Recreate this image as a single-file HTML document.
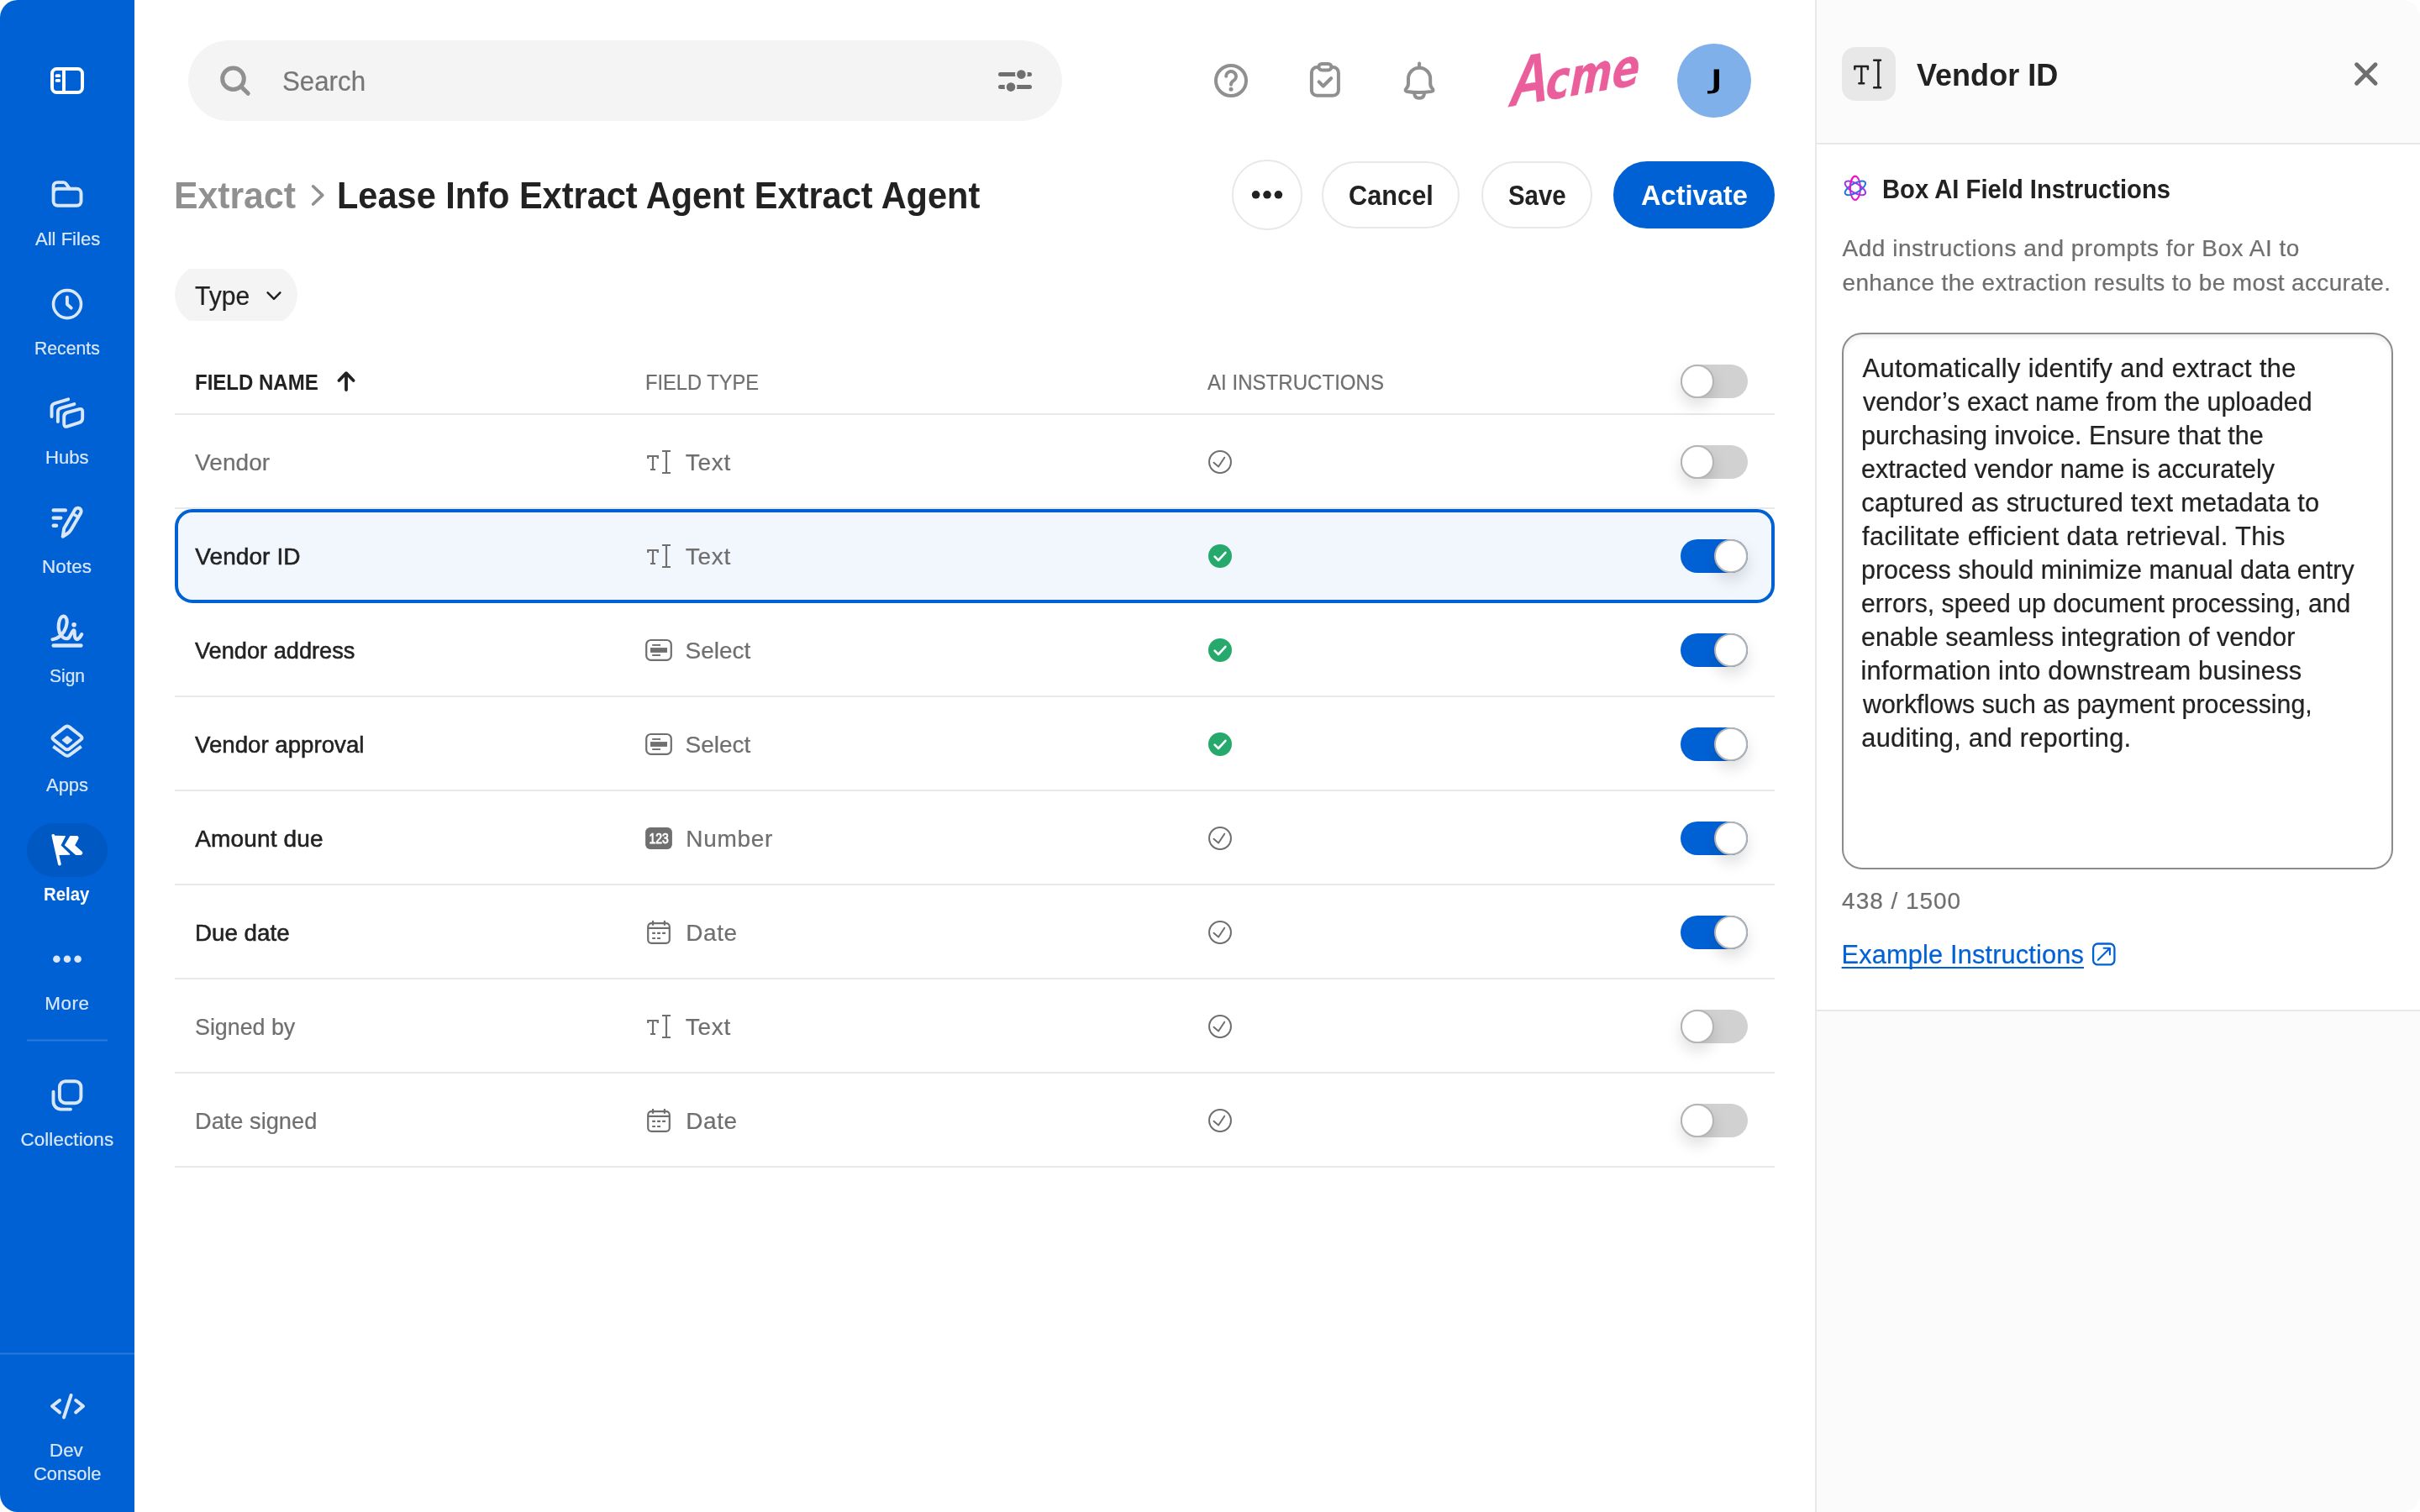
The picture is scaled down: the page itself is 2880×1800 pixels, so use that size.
<!DOCTYPE html>
<html lang="en">
<head>
<meta charset="utf-8">
<title>Extract - Lease Info Extract Agent</title>
<style>
html,body{margin:0;padding:0;background:#fff;}
@media (-webkit-min-device-pixel-ratio:2),(min-resolution:2dppx){html{zoom:.5;}}
body{width:2880px;height:1800px;overflow:hidden;position:relative;font-family:"Liberation Sans",sans-serif;}
#app{position:absolute;left:0;top:0;width:2880px;height:1800px;overflow:hidden;border-radius:21px;background:#fff;will-change:transform;}
.abs{position:absolute;}
.t{position:absolute;white-space:nowrap;line-height:1;transform-origin:0 0;font-family:"Liberation Sans",sans-serif;}
#sidebar{position:absolute;left:0;top:0;width:160px;height:1800px;background:#0061d5;}
.btn{position:absolute;top:192px;height:80px;border-radius:40px;border:2px solid #e8e8e8;box-sizing:border-box;background:#fff;}
.logo{position:absolute;display:inline-block;left:1796px;top:57.80px;white-space:nowrap;line-height:1;font-family:"DejaVu Sans","Liberation Sans",sans-serif;font-style:italic;font-weight:700;font-size:61px;color:#ea5f9b;-webkit-text-stroke:0.3px #ea5f9b;transform-origin:0 69.00px;transform:rotate(-9.8deg) skewX(-12deg) scaleX(0.805);}
.logo::first-letter{font-family:"Liberation Sans",sans-serif;font-size:82px;margin-right:-5px;}
.tg{position:absolute;left:2000px;width:80px;height:40px;border-radius:20px;background:#d1d1d1;}
.tg i{position:absolute;left:0;top:0;width:40px;height:40px;box-sizing:border-box;border-radius:50%;background:#fff;border:2px solid #b4b4b4;box-shadow:0 9px 18px rgba(0,0,0,0.13);}
.tg.on{background:#0061d5;}
.tg.on i{left:40px;}
</style>
</head>
<body>
<div id="app">
<div id="sidebar">
<svg class="abs" style="left:0;top:0" width="160" height="1800" viewBox="0 0 160 1800">
<g fill="none" stroke="#fff" stroke-width="4"><rect x="62" y="82" width="36" height="28" rx="5.5"/><line x1="76" y1="82" x2="76" y2="110"/></g><rect x="65.6" y="88.3" width="6.6" height="3.8" rx="1.9" fill="#fff"/><rect x="65.6" y="94" width="6.6" height="3.8" rx="1.9" fill="#fff"/>
<g fill="none" stroke="#d9e7f9" stroke-width="3.9" stroke-linecap="round" stroke-linejoin="round"><path d="M63.6 229 V221.7 a4.6 4.6 0 0 1 4.6 -4.6 H75.4 a4 4 0 0 1 3.3 1.8 L82.6 224.4"/><rect x="63.6" y="224.8" width="32.9" height="20" rx="5"/></g>
<g fill="none" stroke="#d9e7f9" stroke-linecap="round" stroke-linejoin="round"><circle cx="80" cy="362.1" r="16.5" stroke-width="3.6"/><path d="M79.9 353.7 V362.3 L84.7 366.6" stroke-width="3.9"/></g>
<g fill="none" stroke="#d9e7f9" stroke-width="3.9" stroke-linecap="round" stroke-linejoin="round"><path d="M76.2 504.4 V496.3 Q76.2 492.1 80.2 491 L94.3 487.1 Q98.2 486 98.2 490 V498 Q98.2 502 94.3 503.2 L80.2 507.6 Q76.2 508.8 76.2 504.4 Z"/><path d="M68.9 502.1 V490.5 Q68.9 486.7 72.8 485.6 L88.4 481.1"/><path d="M61.5 496.1 V485 Q61.5 481.2 65.4 480.1 L81.2 475.3"/></g>
<g fill="none" stroke="#d9e7f9" stroke-linecap="round" stroke-linejoin="round"><path d="M63.7 607.4 H77.8 M63.7 616.6 H72.3 M63.7 625.7 H67" stroke-width="4.4"/><path d="M89.35 606.5 A4 4 0 0 1 96.25 610.5 L84.8 630.2 Q82.8 633.6 79.4 635.8 L74.7 638.7 L76.3 628.9 Z" stroke-width="4"/><path d="M87.6 612.3 L93.6 615.8" stroke-width="3.6" stroke-linecap="butt"/></g>
<g fill="none" stroke="#d9e7f9" stroke-linecap="round" stroke-linejoin="round"><path d="M63.7 768.5 H96.4" stroke-width="4.4"/><path d="M62.5 761.2 C68 760.6 73 757 76.4 751.4 C80 745.4 80.6 738 78.2 735 C76 732.2 72.4 733.6 70.8 738.6 C68.8 745 69.6 752.6 72.8 756.6 C76 760.8 80.4 761.6 82.8 758 C84.6 755.2 85.6 751.6 87.4 750.4 C89 749.6 88.6 753 88.8 756 C89 759.6 90.4 761.8 92.6 760.8 C94.6 759.8 96 757.6 97.2 755.2" stroke-width="4.1"/></g><circle cx="88.1" cy="743.7" r="2.8" fill="#d9e7f9"/>
<g fill="none" stroke="#d9e7f9" stroke-width="3.9" stroke-linejoin="round"><path d="M77.2 865.6 Q80 863.4 82.8 865.6 L96.2 876.2 Q98.9 878.4 96.2 880.6 L82.8 891.2 Q80 893.4 77.2 891.2 L63.8 880.6 Q61.1 878.4 63.8 876.2 Z"/><path d="M63.3 888.6 L77.2 898.8 Q80 900.8 82.8 898.8 L96.7 888.6" stroke-linecap="butt"/></g><path d="M79 876.4 Q80 875.6 81 876.4 L85.6 880.2 Q86.6 881.1 85.6 882 L81 885.8 Q80 886.6 79 885.8 L74.4 882 Q73.4 881.1 74.4 880.2 Z" fill="#d9e7f9"/>
<rect x="32" y="980" width="96" height="64" rx="32" fill="#0058c3"/>
<g fill="#fff" stroke="#fff" stroke-linejoin="round" stroke-linecap="round"><path d="M63.3 994.9 L70.9 1028.6" stroke-width="3.7" fill="none"/><path d="M64.4 995.4 L77.2 995.6 L71.7 1006.4 L82.6 1017.1 L69.6 1017.3 Z" stroke-width="1.4"/><path d="M83.9 995.6 L91.6 995.6 Q93.4 996.4 92.6 998.4 L88.4 1006.4 L97.4 1014.6 Q98.2 1016.6 96 1017.2 L90.4 1017.2 L77.6 1006 Z" stroke-width="1.4"/></g>
<g fill="#d9e7f9"><circle cx="67.4" cy="1141.8" r="4.3"/><circle cx="80" cy="1141.8" r="4.3"/><circle cx="92.6" cy="1141.8" r="4.3"/></g>
<rect x="32" y="1237.5" width="96" height="2" fill="#2b7adb"/>
<g fill="none" stroke="#d9e7f9" stroke-width="3.9" stroke-linecap="round" stroke-linejoin="round"><rect x="70.9" y="1287.2" width="25.5" height="26" rx="7"/><path d="M63.5 1299.8 V1311.6 a9 9 0 0 0 9 9 H84"/></g>
<rect x="0" y="1610.5" width="160" height="2" fill="#2b7adb"/>
<g fill="none" stroke="#d9e7f9" stroke-width="4" stroke-linecap="round" stroke-linejoin="round"><path d="M71 1667 L62 1674 L71 1681.4"/><path d="M84.6 1661 L76 1687.4"/><path d="M90.2 1667 L99 1674 L90.2 1681.4"/></g>
</svg>
<span class="t" style="left:41.7px;top:273.61px;font-size:22.4px;font-weight:400;color:#d9e7f9;transform:scaleX(0.9853);-webkit-text-stroke:0.22px #d9e7f9;">All Files</span>
<span class="t" style="left:40.6px;top:403.61px;font-size:22.4px;font-weight:400;color:#d9e7f9;transform:scaleX(0.9475);-webkit-text-stroke:0.22px #d9e7f9;">Recents</span>
<span class="t" style="left:53.7px;top:533.61px;font-size:22.4px;font-weight:400;color:#d9e7f9;transform:scaleX(0.9853);-webkit-text-stroke:0.22px #d9e7f9;">Hubs</span>
<span class="t" style="left:50.1px;top:663.61px;font-size:22.4px;font-weight:400;color:#d9e7f9;letter-spacing:0.08px;-webkit-text-stroke:0.22px #d9e7f9;">Notes</span>
<span class="t" style="left:59.1px;top:793.61px;font-size:22.4px;font-weight:400;color:#d9e7f9;transform:scaleX(0.9384);-webkit-text-stroke:0.22px #d9e7f9;">Sign</span>
<span class="t" style="left:55.3px;top:923.61px;font-size:22.4px;font-weight:400;color:#d9e7f9;transform:scaleX(0.9811);-webkit-text-stroke:0.22px #d9e7f9;">Apps</span>
<span class="t" style="left:52.2px;top:1053.61px;font-size:22.4px;font-weight:700;color:#fff;transform:scaleX(0.9096);">Relay</span>
<span class="t" style="left:53.2px;top:1183.61px;font-size:22.4px;font-weight:400;color:#d9e7f9;letter-spacing:0.61px;-webkit-text-stroke:0.22px #d9e7f9;">More</span>
<span class="t" style="left:24.4px;top:1345.80px;font-size:22.4px;font-weight:400;color:#d9e7f9;letter-spacing:0.12px;-webkit-text-stroke:0.22px #d9e7f9;">Collections</span>
<span class="t" style="left:59.3px;top:1715.91px;font-size:22.4px;font-weight:400;color:#d9e7f9;transform:scaleX(0.9986);-webkit-text-stroke:0.22px #d9e7f9;">Dev</span>
<span class="t" style="left:39.7px;top:1743.71px;font-size:22.4px;font-weight:400;color:#d9e7f9;transform:scaleX(0.9794);-webkit-text-stroke:0.22px #d9e7f9;">Console</span>
</div>
<div id="main">
<div class="abs" style="left:224px;top:48px;width:1040px;height:96px;border-radius:48px;background:#f4f4f4"></div>
<span class="t" style="left:336.1px;top:80.01px;font-size:33.6px;font-weight:400;color:#767676;transform:scaleX(0.9307);-webkit-text-stroke:0.22px #767676;">Search</span>
<svg class="abs" style="left:160px;top:0" width="2000" height="300" viewBox="160 0 2000 300">
<g fill="none" stroke="#909090" stroke-width="5" stroke-linecap="round"><circle cx="277.5" cy="93.7" r="12.8"/><path d="M287.2 103.4 L295.2 111.3"/></g>
<g stroke="#6f6f6f" stroke-width="5" stroke-linecap="round" fill="#6f6f6f"><path d="M1190.5 88.6 H1225.5 M1190.5 103.6 H1225.5"/><circle cx="1215.4" cy="88.6" r="7.4" fill="#f4f4f4" stroke="none"/><circle cx="1215.4" cy="88.6" r="5.3" stroke="none"/><circle cx="1203" cy="103.6" r="7.4" fill="#f4f4f4" stroke="none"/><circle cx="1203" cy="103.6" r="5.3" stroke="none"/></g>
<g fill="none" stroke="#909090" stroke-width="4" stroke-linecap="round" stroke-linejoin="round"><circle cx="1465" cy="96" r="18"/><path d="M1459.2 90.8 a5.9 5.9 0 1 1 8.6 5.3 c-2 1.2 -2.8 2.3 -2.8 4.7"/></g><circle cx="1465" cy="106.2" r="2.5" fill="#909090"/>
<g fill="none" stroke="#909090" stroke-width="4" stroke-linecap="round" stroke-linejoin="round"><rect x="1560.9" y="80" width="32" height="33.8" rx="6.4"/><rect x="1569.4" y="75.9" width="15" height="7.5" rx="3.75" fill="#fff"/><path d="M1569.7 97.4 L1574.8 102.6 L1584.1 93.3" stroke-width="4.2"/></g>
<g fill="none" stroke="#909090" stroke-width="4" stroke-linecap="round" stroke-linejoin="round"><path d="M1689.1 75.6 V79"/><path d="M1676 93.7 a13.1 13.1 0 0 1 26.2 0 V99.4 c0 3 1 4.6 2.6 6.2 c1.6 1.6 0.8 3 -1 3.3 c-9.6 1.5 -19.8 1.5 -29.4 0 c-1.8 -0.3 -2.6 -1.7 -1 -3.3 c1.6 -1.6 2.6 -3.2 2.6 -6.2 Z"/><path d="M1683.3 112.4 a6 6 0 0 0 11.6 0"/></g>
<path d="M372.6 221.8 L383.8 232.4 L372.6 243" fill="none" stroke="#909090" stroke-width="3.6" stroke-linecap="round" stroke-linejoin="round"/>
<g fill="#222222"><circle cx="1494.6" cy="231.8" r="4.8"/><circle cx="1508" cy="231.8" r="4.8"/><circle cx="1521.4" cy="231.8" r="4.8"/></g>
</svg>
<span class="logo">Acme</span>
<div class="abs" style="left:1996px;top:52px;width:88px;height:88px;border-radius:50%;background:#80b0ea"></div>
<svg class="abs" style="left:2010px;top:60px" width="60" height="70" viewBox="2010 60 60 70"><text transform="translate(2035.2 105.2) scale(1.68 1)" font-family="DejaVu Sans, Liberation Sans, sans-serif" font-size="30.6" fill="#000" stroke="#000" stroke-width="0.75">J</text></svg>
<span class="t" style="left:207.3px;top:209.51px;font-size:44.8px;font-weight:700;color:#909090;transform:scaleX(0.9538);">Extract</span>
<span class="t" style="left:401.2px;top:209.51px;font-size:44.8px;font-weight:700;color:#222222;transform:scaleX(0.9269);">Lease Info Extract Agent Extract Agent</span>
<div class="abs" style="left:1466.4px;top:190.4px;width:83.2px;height:83.2px;border-radius:50%;border:2px solid #e8e8e8;box-sizing:border-box"></div>
<div class="btn" style="left:1572.6px;width:164.8px"></div>
<div class="btn" style="left:1762.6px;width:132.8px"></div>
<div class="btn" style="left:1920px;width:192px;background:#0061d5;border-color:#0061d5"></div>
<span class="t" style="left:1604.5px;top:216.20px;font-size:33.6px;font-weight:700;color:#222222;transform:scaleX(0.9151);">Cancel</span>
<span class="t" style="left:1794.5px;top:216.20px;font-size:33.6px;font-weight:700;color:#222222;transform:scaleX(0.8759);">Save</span>
<span class="t" style="left:1952.5px;top:216.20px;font-size:33.6px;font-weight:700;color:#fff;transform:scaleX(0.9708);">Activate</span>
<div class="abs" style="left:208px;top:320px;width:146px;height:62px;overflow:hidden"><div class="abs" style="left:0;top:-5px;width:146px;height:72px;border-radius:36px;background:#f4f4f4"></div></div>
<span class="t" style="left:232.3px;top:338.21px;font-size:30.8px;font-weight:400;color:#222222;transform:scaleX(0.9766);-webkit-text-stroke:0.22px #222222;">Type</span>
<svg class="abs" style="left:310px;top:340px" width="32" height="24" viewBox="310 340 32 24"><path d="M318.6 348.4 L326 355.8 L333.4 348.4" fill="none" stroke="#222222" stroke-width="2.5" stroke-linecap="round" stroke-linejoin="round"/></svg>
<span class="t" style="left:231.7px;top:443.00px;font-size:25.6px;font-weight:700;color:#222222;transform:scaleX(0.9380);">FIELD NAME</span>
<span class="t" style="left:767.7px;top:443.00px;font-size:25.6px;font-weight:400;color:#6f6f6f;transform:scaleX(0.9247);-webkit-text-stroke:0.22px #6f6f6f;">FIELD TYPE</span>
<span class="t" style="left:1436.7px;top:443.00px;font-size:25.6px;font-weight:400;color:#6f6f6f;transform:scaleX(0.9407);-webkit-text-stroke:0.22px #6f6f6f;">AI INSTRUCTIONS</span>
<div class="abs" style="left:208px;top:492px;width:1904px;height:2px;background:#e8e8e8"></div>
<div class="abs" style="left:208px;top:604px;width:1904px;height:2px;background:#e8e8e8"></div>
<div class="abs" style="left:208px;top:828px;width:1904px;height:2px;background:#e8e8e8"></div>
<div class="abs" style="left:208px;top:940px;width:1904px;height:2px;background:#e8e8e8"></div>
<div class="abs" style="left:208px;top:1052px;width:1904px;height:2px;background:#e8e8e8"></div>
<div class="abs" style="left:208px;top:1164px;width:1904px;height:2px;background:#e8e8e8"></div>
<div class="abs" style="left:208px;top:1276px;width:1904px;height:2px;background:#e8e8e8"></div>
<div class="abs" style="left:208px;top:1388px;width:1904px;height:2px;background:#e8e8e8"></div>
<div class="abs" style="left:208px;top:606px;width:1904px;height:112px;box-sizing:border-box;border:4px solid #0061d5;border-radius:21px;background:#f2f7fd"></div>
<div class="tg" style="top:434px"><i></i></div>
<span class="t" style="left:232.1px;top:537.00px;font-size:28px;font-weight:400;color:#6f6f6f;letter-spacing:0.06px;-webkit-text-stroke:0.22px #6f6f6f;">Vendor</span>
<span class="t" style="left:815.7px;top:537.00px;font-size:28px;font-weight:400;color:#6f6f6f;letter-spacing:0.72px;-webkit-text-stroke:0.22px #6f6f6f;">Text</span>
<div class="tg" style="top:530px"><i></i></div>
<span class="t" style="left:232.3px;top:649.00px;font-size:28px;font-weight:400;color:#222222;letter-spacing:0.08px;-webkit-text-stroke:0.55px #222222;">Vendor ID</span>
<span class="t" style="left:815.7px;top:649.00px;font-size:28px;font-weight:400;color:#6f6f6f;letter-spacing:0.72px;-webkit-text-stroke:0.22px #6f6f6f;">Text</span>
<div class="tg on" style="top:642px"><i></i></div>
<span class="t" style="left:232.3px;top:761.00px;font-size:28px;font-weight:400;color:#222222;transform:scaleX(0.9703);-webkit-text-stroke:0.55px #222222;">Vendor address</span>
<span class="t" style="left:815.5px;top:761.00px;font-size:28px;font-weight:400;color:#6f6f6f;-webkit-text-stroke:0.22px #6f6f6f;">Select</span>
<div class="tg on" style="top:754px"><i></i></div>
<span class="t" style="left:232.3px;top:873.00px;font-size:28px;font-weight:400;color:#222222;transform:scaleX(0.9876);-webkit-text-stroke:0.55px #222222;">Vendor approval</span>
<span class="t" style="left:815.5px;top:873.00px;font-size:28px;font-weight:400;color:#6f6f6f;-webkit-text-stroke:0.22px #6f6f6f;">Select</span>
<div class="tg on" style="top:866px"><i></i></div>
<span class="t" style="left:232.3px;top:985.00px;font-size:28px;font-weight:400;color:#222222;letter-spacing:0.15px;-webkit-text-stroke:0.55px #222222;">Amount due</span>
<span class="t" style="left:816.2px;top:985.00px;font-size:28px;font-weight:400;color:#6f6f6f;letter-spacing:0.72px;-webkit-text-stroke:0.22px #6f6f6f;">Number</span>
<div class="tg on" style="top:978px"><i></i></div>
<span class="t" style="left:232.4px;top:1097.00px;font-size:28px;font-weight:400;color:#222222;transform:scaleX(0.9907);-webkit-text-stroke:0.55px #222222;">Due date</span>
<span class="t" style="left:816.2px;top:1097.00px;font-size:28px;font-weight:400;color:#6f6f6f;letter-spacing:0.58px;-webkit-text-stroke:0.22px #6f6f6f;">Date</span>
<div class="tg on" style="top:1090px"><i></i></div>
<span class="t" style="left:231.8px;top:1209.00px;font-size:28px;font-weight:400;color:#6f6f6f;transform:scaleX(0.9577);-webkit-text-stroke:0.22px #6f6f6f;">Signed by</span>
<span class="t" style="left:815.7px;top:1209.00px;font-size:28px;font-weight:400;color:#6f6f6f;letter-spacing:0.72px;-webkit-text-stroke:0.22px #6f6f6f;">Text</span>
<div class="tg" style="top:1202px"><i></i></div>
<span class="t" style="left:232.4px;top:1321.00px;font-size:28px;font-weight:400;color:#6f6f6f;transform:scaleX(0.9721);-webkit-text-stroke:0.22px #6f6f6f;">Date signed</span>
<span class="t" style="left:816.2px;top:1321.00px;font-size:28px;font-weight:400;color:#6f6f6f;letter-spacing:0.58px;-webkit-text-stroke:0.22px #6f6f6f;">Date</span>
<div class="tg" style="top:1314px"><i></i></div>
<svg class="abs" style="left:160px;top:400px" width="2000" height="1000" viewBox="160 400 2000 1000">
<path d="M412 464 V444.6 M403.4 453 L412 444.2 L420.6 453" fill="none" stroke="#222222" stroke-width="3.8" stroke-linecap="round" stroke-linejoin="round"/>
<g transform="translate(768 550) scale(1.0)" fill="none" stroke="#6f6f6f" stroke-width="2.2" stroke-linecap="butt" stroke-linejoin="miter"><path d="M3.2 -4 V-7 H14.8 V-4 M9 -7 V9 M6 9 H12"/><path d="M20 -13 H30 M25 -13 V13 M20 13 H30"/></g>
<g fill="none" stroke="#6f6f6f" stroke-linecap="round" stroke-linejoin="round"><circle cx="1452" cy="550" r="12.95" stroke-width="2.05"/><path d="M1444.5 550.7 L1450.1 555.5 L1457.2 544.7" stroke-width="2"/></g>
<g transform="translate(768 662) scale(1.0)" fill="none" stroke="#6f6f6f" stroke-width="2.2" stroke-linecap="butt" stroke-linejoin="miter"><path d="M3.2 -4 V-7 H14.8 V-4 M9 -7 V9 M6 9 H12"/><path d="M20 -13 H30 M25 -13 V13 M20 13 H30"/></g>
<circle cx="1452" cy="662" r="14" fill="#26a96c"/><path d="M1445.6 662.6 L1450 667 L1458.4 657.8" fill="none" stroke="#fff" stroke-width="2.6" stroke-linecap="round" stroke-linejoin="round"/>
<g transform="translate(768 774)"><rect x="1.2" y="-12" width="29.6" height="23.8" rx="5.4" fill="none" stroke="#6f6f6f" stroke-width="2.2"/><rect x="6" y="-2.9" width="20" height="5.8" fill="#6f6f6f"/><rect x="8.2" y="-7" width="9.8" height="1.9" fill="#6f6f6f"/><rect x="8.2" y="5.1" width="9.8" height="1.9" fill="#6f6f6f"/></g>
<circle cx="1452" cy="774" r="14" fill="#26a96c"/><path d="M1445.6 774.6 L1450 779 L1458.4 769.8" fill="none" stroke="#fff" stroke-width="2.6" stroke-linecap="round" stroke-linejoin="round"/>
<g transform="translate(768 886)"><rect x="1.2" y="-12" width="29.6" height="23.8" rx="5.4" fill="none" stroke="#6f6f6f" stroke-width="2.2"/><rect x="6" y="-2.9" width="20" height="5.8" fill="#6f6f6f"/><rect x="8.2" y="-7" width="9.8" height="1.9" fill="#6f6f6f"/><rect x="8.2" y="5.1" width="9.8" height="1.9" fill="#6f6f6f"/></g>
<circle cx="1452" cy="886" r="14" fill="#26a96c"/><path d="M1445.6 886.6 L1450 891 L1458.4 881.8" fill="none" stroke="#fff" stroke-width="2.6" stroke-linecap="round" stroke-linejoin="round"/>
<g transform="translate(768 998)"><rect x="0.1" y="-13" width="31.8" height="25.9" rx="5.6" fill="#6f6f6f"/><text x="4.5" y="5.7" font-family="Liberation Sans, sans-serif" font-weight="400" font-size="15.6" textLength="23.2" lengthAdjust="spacingAndGlyphs" fill="#fff" stroke="#fff" stroke-width="0.75">123</text></g>
<g fill="none" stroke="#6f6f6f" stroke-linecap="round" stroke-linejoin="round"><circle cx="1452" cy="998" r="12.95" stroke-width="2.05"/><path d="M1444.5 998.7 L1450.1 1003.5 L1457.2 992.7" stroke-width="2"/></g>
<g transform="translate(768 1110)" fill="none" stroke="#6f6f6f" stroke-width="2.2" stroke-linecap="butt"><rect x="3.2" y="-10.8" width="25.6" height="23.6" rx="4"/><path d="M3.2 -5.1 H28.8"/><path d="M9 -14 V-8.2 M22.9 -14 V-8.2"/><path d="M8.2 0.9 H11.9 M14.1 0.9 H18 M20.1 0.9 H24 M8.2 7 H11.9 M14.1 7 H18"/></g>
<g fill="none" stroke="#6f6f6f" stroke-linecap="round" stroke-linejoin="round"><circle cx="1452" cy="1110" r="12.95" stroke-width="2.05"/><path d="M1444.5 1110.7 L1450.1 1115.5 L1457.2 1104.7" stroke-width="2"/></g>
<g transform="translate(768 1222) scale(1.0)" fill="none" stroke="#6f6f6f" stroke-width="2.2" stroke-linecap="butt" stroke-linejoin="miter"><path d="M3.2 -4 V-7 H14.8 V-4 M9 -7 V9 M6 9 H12"/><path d="M20 -13 H30 M25 -13 V13 M20 13 H30"/></g>
<g fill="none" stroke="#6f6f6f" stroke-linecap="round" stroke-linejoin="round"><circle cx="1452" cy="1222" r="12.95" stroke-width="2.05"/><path d="M1444.5 1222.7 L1450.1 1227.5 L1457.2 1216.7" stroke-width="2"/></g>
<g transform="translate(768 1334)" fill="none" stroke="#6f6f6f" stroke-width="2.2" stroke-linecap="butt"><rect x="3.2" y="-10.8" width="25.6" height="23.6" rx="4"/><path d="M3.2 -5.1 H28.8"/><path d="M9 -14 V-8.2 M22.9 -14 V-8.2"/><path d="M8.2 0.9 H11.9 M14.1 0.9 H18 M20.1 0.9 H24 M8.2 7 H11.9 M14.1 7 H18"/></g>
<g fill="none" stroke="#6f6f6f" stroke-linecap="round" stroke-linejoin="round"><circle cx="1452" cy="1334" r="12.95" stroke-width="2.05"/><path d="M1444.5 1334.7 L1450.1 1339.5 L1457.2 1328.7" stroke-width="2"/></g>
</svg>
</div>
<div id="panel">
<div class="abs" style="left:2160px;top:0;width:720px;height:1800px;background:#fbfbfb"></div>
<div class="abs" style="left:2162px;top:172px;width:718px;height:1030px;background:#fff"></div>
<div class="abs" style="left:2160px;top:0;width:2px;height:1800px;background:#e8e8e8"></div>
<div class="abs" style="left:2162px;top:170px;width:718px;height:2px;background:#e8e8e8"></div>
<div class="abs" style="left:2162px;top:1201.5px;width:718px;height:2px;background:#e8e8e8"></div>
<div class="abs" style="left:2192px;top:56px;width:64px;height:64px;border-radius:16px;background:#e8e8e8"></div>
<svg class="abs" style="left:2160px;top:40px" width="720" height="220" viewBox="2160 40 720 220">
<g fill="none" stroke="#222222" stroke-width="2.5" stroke-linecap="round" stroke-linejoin="round"><path d="M2207.3 82.2 V79.1 H2222.9 V82.2 M2215.3 79.1 V99.3 M2212.4 99.3 H2218.2"/><path d="M2230.2 71.7 H2238 M2235.4 71.7 V104.2 M2230.2 104.2 H2238" stroke-width="2.6"/></g>
<path d="M2804.6 76.8 L2827 99.2 M2827 76.8 L2804.6 99.2" stroke="#6f6f6f" stroke-width="5" stroke-linecap="round"/>
<g fill="none" stroke-width="1.95"><ellipse cx="2207.9" cy="223.9" rx="6.05" ry="14.2" stroke="#f50fc6"/><ellipse cx="2207.9" cy="223.9" rx="5.5" ry="13.7" stroke="#1675ea" transform="rotate(60 2207.9 223.9)"/><ellipse cx="2207.9" cy="223.9" rx="5.5" ry="13.7" stroke="#9a35ea" transform="rotate(-60 2207.9 223.9)"/><path d="M2201.9 226 A6.05 14.2 0 0 1 2207.9 209.7" stroke="#f50fc6"/></g>
</svg>
<span class="t" style="left:2280.8px;top:70.80px;font-size:37px;font-weight:700;color:#222222;transform:scaleX(0.9742);">Vendor ID</span>
<span class="t" style="left:2239.5px;top:209.81px;font-size:31px;font-weight:700;color:#222222;transform:scaleX(0.9425);">Box AI Field Instructions</span>
<span class="t" style="left:2192.6px;top:282.41px;font-size:28px;font-weight:400;color:#6f6f6f;letter-spacing:0.51px;-webkit-text-stroke:0.22px #6f6f6f;">Add instructions and prompts for Box AI to</span>
<span class="t" style="left:2192.5px;top:322.61px;font-size:28px;font-weight:400;color:#6f6f6f;letter-spacing:0.35px;-webkit-text-stroke:0.22px #6f6f6f;">enhance the extraction results to be most accurate.</span>
<div class="abs" style="left:2192px;top:396px;width:656px;height:639px;box-sizing:border-box;border:2px solid #8c8c8c;border-radius:24px;background:#fff;box-shadow:inset 0 3px 5px rgba(0,0,0,0.07)"></div>
<span class="t" style="left:2216.5px;top:423.60px;font-size:30.8px;font-weight:400;color:#222222;letter-spacing:0.39px;-webkit-text-stroke:0.22px #222222;">Automatically identify and extract the</span>
<span class="t" style="left:2216.5px;top:463.60px;font-size:30.8px;font-weight:400;color:#222222;transform:scaleX(0.9872);-webkit-text-stroke:0.22px #222222;">vendor’s exact name from the uploaded</span>
<span class="t" style="left:2214.6px;top:503.60px;font-size:30.8px;font-weight:400;color:#222222;transform:scaleX(0.9955);-webkit-text-stroke:0.22px #222222;">purchasing invoice. Ensure that the</span>
<span class="t" style="left:2215.3px;top:543.60px;font-size:30.8px;font-weight:400;color:#222222;transform:scaleX(0.9946);-webkit-text-stroke:0.22px #222222;">extracted vendor name is accurately</span>
<span class="t" style="left:2215.3px;top:583.60px;font-size:30.8px;font-weight:400;color:#222222;letter-spacing:0.24px;-webkit-text-stroke:0.22px #222222;">captured as structured text metadata to</span>
<span class="t" style="left:2216.1px;top:623.60px;font-size:30.8px;font-weight:400;color:#222222;letter-spacing:0.37px;-webkit-text-stroke:0.22px #222222;">facilitate efficient data retrieval. This</span>
<span class="t" style="left:2214.7px;top:663.60px;font-size:30.8px;font-weight:400;color:#222222;transform:scaleX(0.9905);-webkit-text-stroke:0.22px #222222;">process should minimize manual data entry</span>
<span class="t" style="left:2215.3px;top:703.60px;font-size:30.8px;font-weight:400;color:#222222;transform:scaleX(0.9803);-webkit-text-stroke:0.22px #222222;">errors, speed up document processing, and</span>
<span class="t" style="left:2215.3px;top:743.60px;font-size:30.8px;font-weight:400;color:#222222;transform:scaleX(0.9925);-webkit-text-stroke:0.22px #222222;">enable seamless integration of vendor</span>
<span class="t" style="left:2214.5px;top:783.60px;font-size:30.8px;font-weight:400;color:#222222;letter-spacing:0.22px;-webkit-text-stroke:0.22px #222222;">information into downstream business</span>
<span class="t" style="left:2216.6px;top:823.60px;font-size:30.8px;font-weight:400;color:#222222;transform:scaleX(0.9856);-webkit-text-stroke:0.22px #222222;">workflows such as payment processing,</span>
<span class="t" style="left:2215.3px;top:863.60px;font-size:30.8px;font-weight:400;color:#222222;letter-spacing:0.25px;-webkit-text-stroke:0.22px #222222;">auditing, and reporting.</span>
<span class="t" style="left:2192.1px;top:1059.00px;font-size:28px;font-weight:400;color:#6f6f6f;letter-spacing:0.96px;-webkit-text-stroke:0.22px #6f6f6f;">438 / 1500</span>
<span class="t" style="left:2191.6px;top:1122.01px;font-size:30.8px;font-weight:400;color:#0061d5;letter-spacing:0.13px;-webkit-text-stroke:0.22px #0061d5;text-decoration:underline;text-decoration-thickness:1.9px;text-underline-offset:3.5px;text-decoration-skip-ink:none;">Example Instructions</span>
<svg class="abs" style="left:2486px;top:1118px" width="36" height="36" viewBox="2486 1118 36 36"><g fill="none" stroke="#0061d5" stroke-linecap="round" stroke-linejoin="round"><rect x="2491.1" y="1123.5" width="25.3" height="24.9" rx="5.4" stroke-width="2.3"/><path d="M2496.8 1142.8 L2510.4 1129.2 M2503.6 1128.7 H2510.9 V1136.4" stroke-width="2.1"/></g></svg>
</div>
</div>
</body>
</html>
